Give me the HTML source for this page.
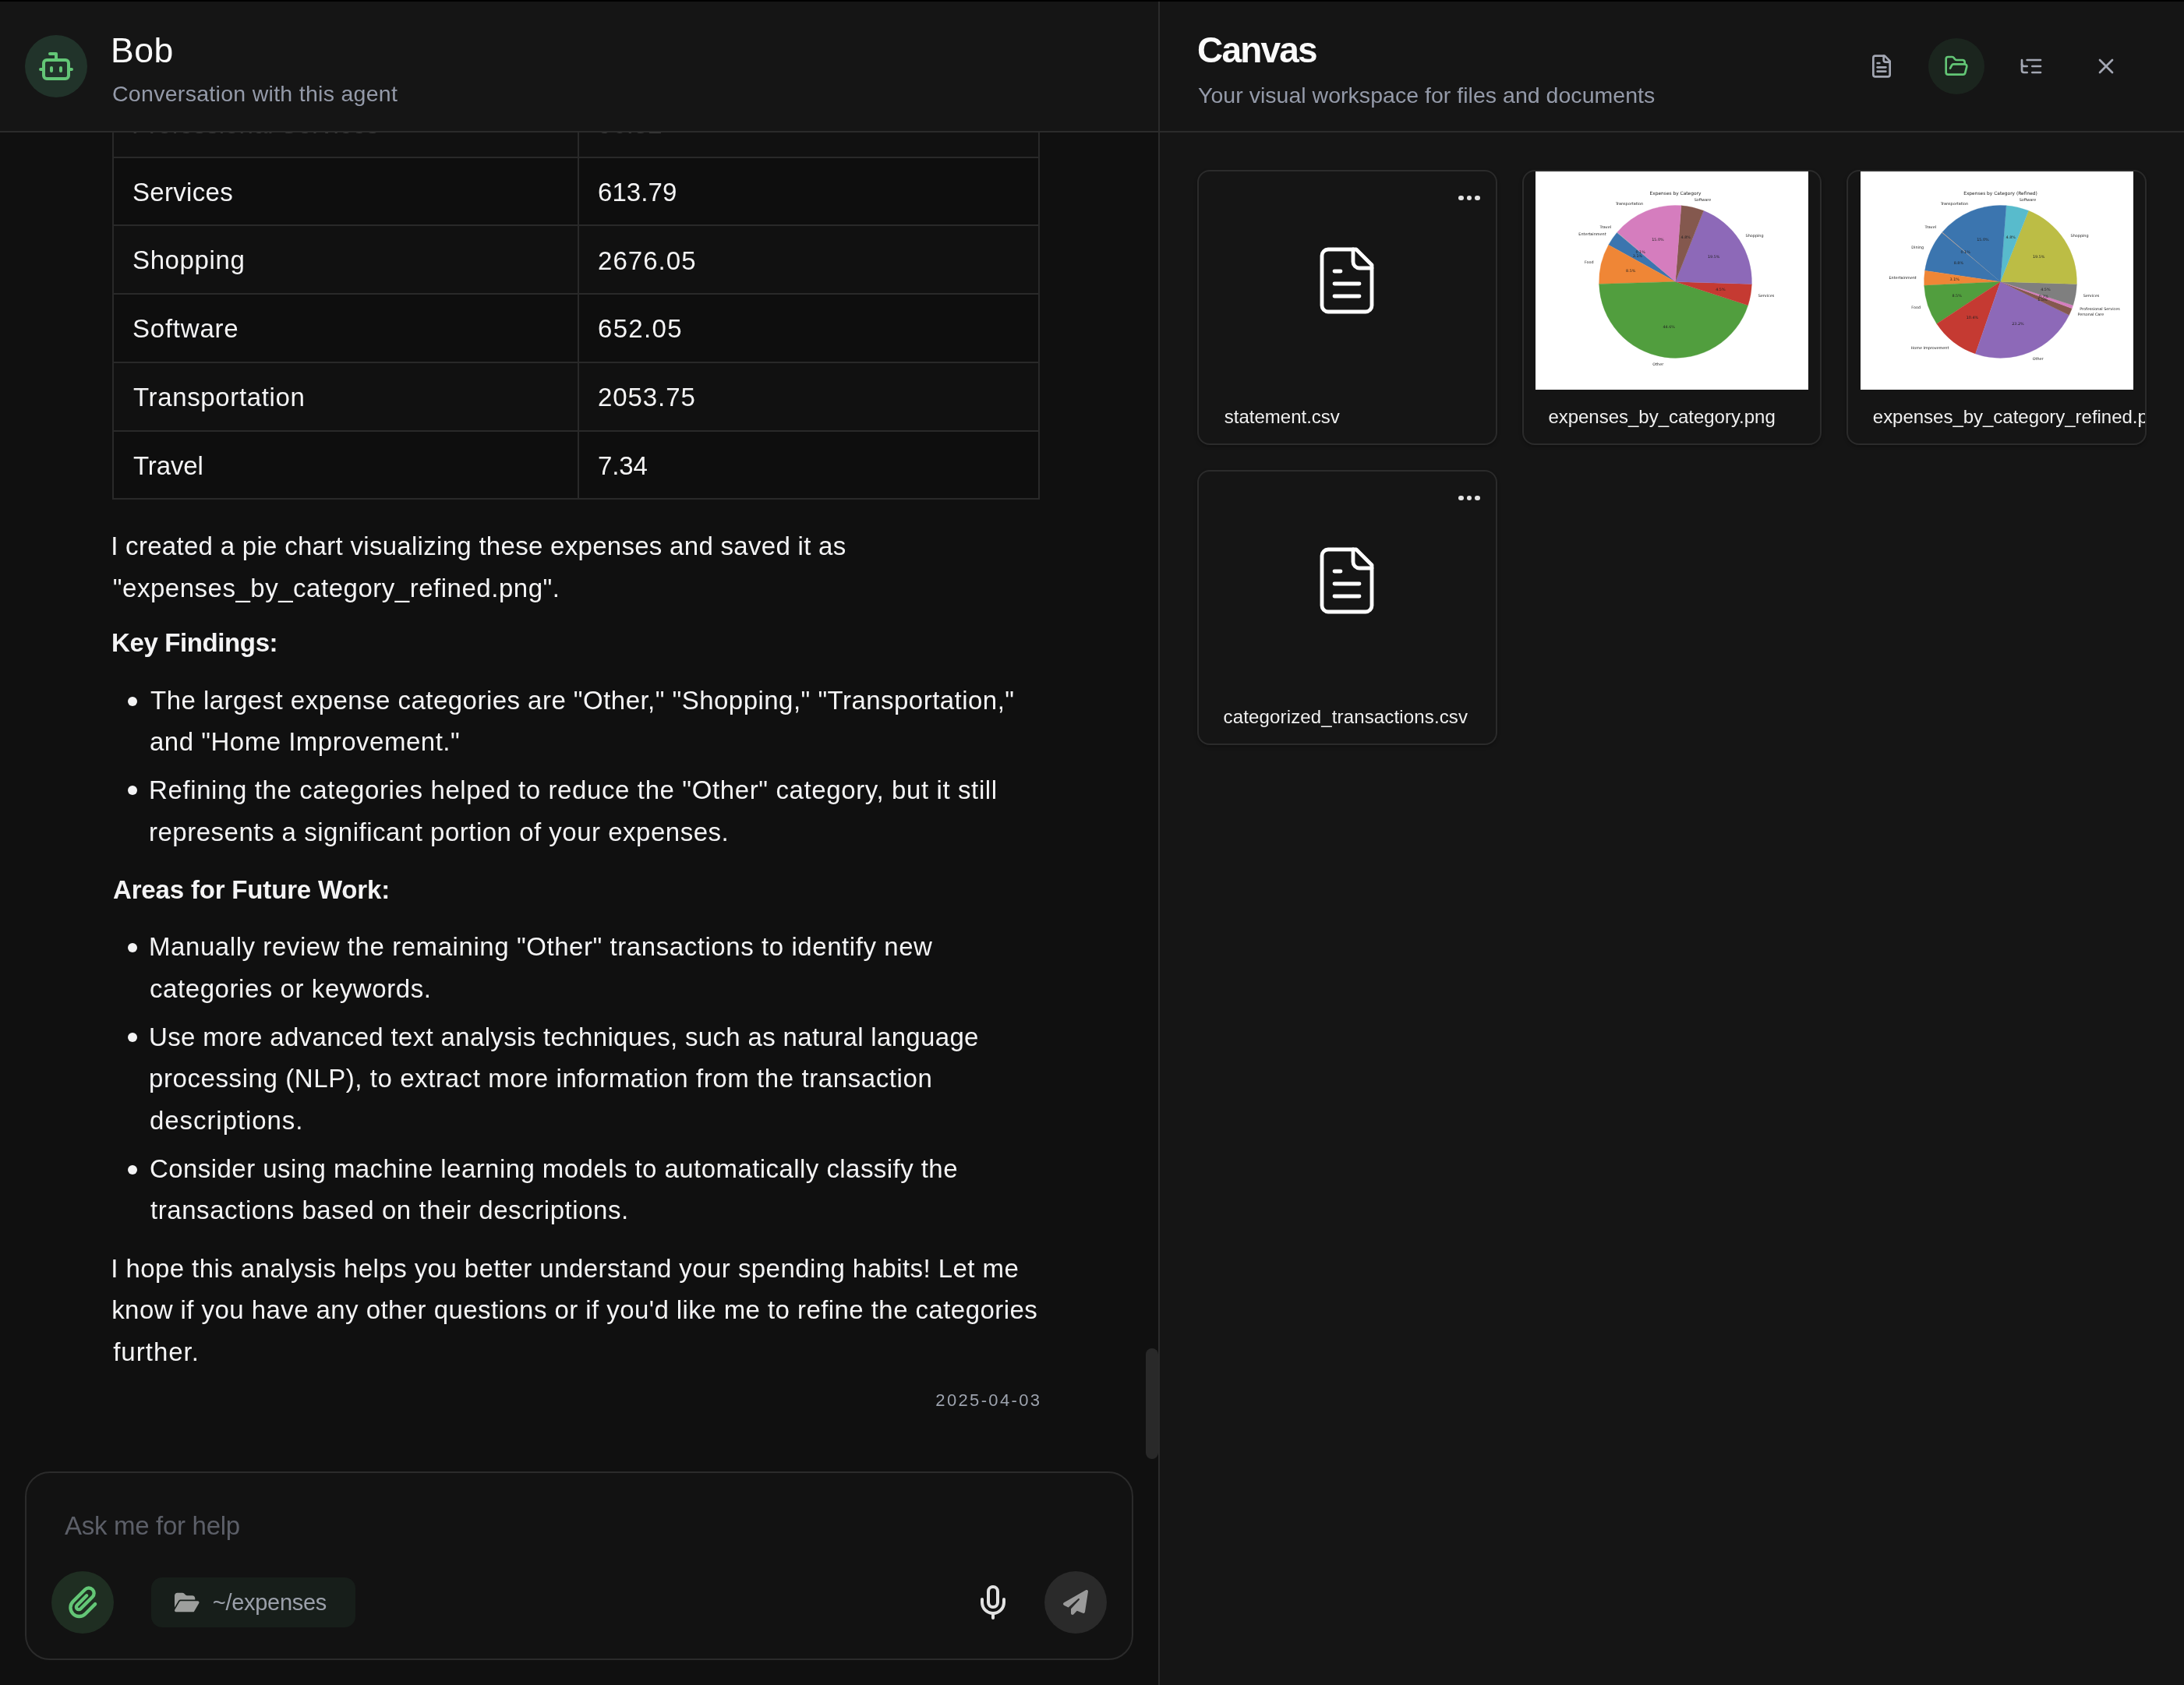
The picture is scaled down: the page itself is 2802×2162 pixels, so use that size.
<!DOCTYPE html>
<html lang="en"><head><meta charset="utf-8"><title>Bob - Canvas</title>
<style>
*{box-sizing:border-box;margin:0;padding:0}
html,body{width:2802px;height:2162px;overflow:hidden;background:#101010;font-family:"Liberation Sans", sans-serif;}
#app{position:relative;width:2802px;height:2162px;overflow:hidden;will-change:transform}
.t{position:absolute;white-space:nowrap;}
.ic{position:absolute;display:block;overflow:visible}
.ln{position:absolute;background:#2b2b2b}
.dot{position:absolute;width:6.4px;height:6.4px;border-radius:50%;background:#e2e2e2}
.bul{position:absolute;width:12px;height:12px;border-radius:50%;background:#f4f4f5}
.card{position:absolute;width:384.67px;height:353px;border:2px solid #2b2b2b;border-radius:16px;background:#151515;overflow:hidden;box-shadow:0 2px 4px rgba(0,0,0,.28)}
.circ{position:absolute;border-radius:50%}
</style></head><body>
<div id="app">
<!-- chat scroll area -->
<div id="chat" style="position:absolute;left:0;top:0;width:1486px;height:2162px">
<div style="position:absolute;left:146px;top:116px;width:1186px;height:85px;background:#111111"></div><div style="position:absolute;left:146px;top:203px;width:1186px;height:85px;background:#0e0e0e"></div><div style="position:absolute;left:146px;top:290px;width:1186px;height:86px;background:#111111"></div><div style="position:absolute;left:146px;top:378px;width:1186px;height:86px;background:#0e0e0e"></div><div style="position:absolute;left:146px;top:466px;width:1186px;height:86px;background:#111111"></div><div style="position:absolute;left:146px;top:554px;width:1186px;height:85px;background:#0e0e0e"></div><div class="ln" style="left:144px;top:201px;width:1190px;height:2px;background:#292929"></div><div class="ln" style="left:144px;top:288px;width:1190px;height:2px;background:#292929"></div><div class="ln" style="left:144px;top:376px;width:1190px;height:2px;background:#292929"></div><div class="ln" style="left:144px;top:464px;width:1190px;height:2px;background:#292929"></div><div class="ln" style="left:144px;top:552px;width:1190px;height:2px;background:#292929"></div><div class="ln" style="left:144px;top:639px;width:1190px;height:2px;background:#292929"></div><div class="ln" style="left:144px;top:150px;width:2px;height:491px;background:#292929"></div><div class="ln" style="left:741px;top:150px;width:2px;height:491px;background:#292929"></div><div class="ln" style="left:1332px;top:150px;width:2px;height:491px;background:#292929"></div>
<i class="bul" style="left:163.5px;top:893.5px"></i><i class="bul" style="left:163.5px;top:1008.3px"></i><i class="bul" style="left:163.5px;top:1209.5px"></i><i class="bul" style="left:163.5px;top:1325.0px"></i><i class="bul" style="left:163.5px;top:1494.5px"></i>
<div class="t" id="t_r0a" style="left:169.0px;top:137.8px;font-size:33px;line-height:43px;letter-spacing:0.000px;color:rgba(244,244,245,0.2);">Professional Services</div><div class="t" id="t_r0b" style="left:767.0px;top:138.0px;font-size:33px;line-height:43px;letter-spacing:0.000px;color:rgba(244,244,245,0.2);">96.32</div><div class="t" id="t_r1a" style="left:170.0px;top:224.7px;font-size:33px;line-height:43px;letter-spacing:0.316px;color:#f4f4f5;">Services</div><div class="t" id="t_r1b" style="left:767.0px;top:225.0px;font-size:33px;line-height:43px;letter-spacing:0.084px;color:#f4f4f5;">613.79</div><div class="t" id="t_r2a" style="left:170.0px;top:312.4px;font-size:33px;line-height:43px;letter-spacing:0.628px;color:#f4f4f5;">Shopping</div><div class="t" id="t_r2b" style="left:767.0px;top:312.7px;font-size:33px;line-height:43px;letter-spacing:1.053px;color:#f4f4f5;">2676.05</div><div class="t" id="t_r3a" style="left:170.0px;top:400.1px;font-size:33px;line-height:43px;letter-spacing:0.775px;color:#f4f4f5;">Software</div><div class="t" id="t_r3b" style="left:767.0px;top:400.4px;font-size:33px;line-height:43px;letter-spacing:1.334px;color:#f4f4f5;">652.05</div><div class="t" id="t_r4a" style="left:171.0px;top:487.8px;font-size:33px;line-height:43px;letter-spacing:0.646px;color:#f4f4f5;">Transportation</div><div class="t" id="t_r4b" style="left:767.0px;top:488.1px;font-size:33px;line-height:43px;letter-spacing:0.928px;color:#f4f4f5;">2053.75</div><div class="t" id="t_r5a" style="left:171.0px;top:575.5px;font-size:33px;line-height:43px;letter-spacing:-0.126px;color:#f4f4f5;">Travel</div><div class="t" id="t_r5b" style="left:767.0px;top:575.8px;font-size:33px;line-height:43px;letter-spacing:-0.126px;color:#f4f4f5;">7.34</div><div class="t" id="t_l1" style="left:142.2px;top:679.0px;font-size:33px;line-height:43px;letter-spacing:0.293px;color:#f4f4f5;">I created a pie chart visualizing these expenses and saved it as</div><div class="t" id="t_l2" style="left:144.8px;top:732.8px;font-size:33px;line-height:43px;letter-spacing:0.520px;color:#f4f4f5;">&quot;expenses_by_category_refined.png&quot;.</div><div class="t" id="t_h1" style="left:143.0px;top:802.5px;font-size:33px;line-height:43px;letter-spacing:-0.382px;color:#f4f4f5;font-weight:700;">Key Findings:</div><div class="t" id="t_b1a" style="left:193.0px;top:877.0px;font-size:33px;line-height:43px;letter-spacing:0.468px;color:#f4f4f5;">The largest expense categories are &quot;Other,&quot; &quot;Shopping,&quot; &quot;Transportation,&quot;</div><div class="t" id="t_b1b" style="left:192.0px;top:930.3px;font-size:33px;line-height:43px;letter-spacing:0.506px;color:#f4f4f5;">and &quot;Home Improvement.&quot;</div><div class="t" id="t_b2a" style="left:191.0px;top:991.8px;font-size:33px;line-height:43px;letter-spacing:0.613px;color:#f4f4f5;">Refining the categories helped to reduce the &quot;Other&quot; category, but it still</div><div class="t" id="t_b2b" style="left:191.0px;top:1045.5px;font-size:33px;line-height:43px;letter-spacing:0.502px;color:#f4f4f5;">represents a significant portion of your expenses.</div><div class="t" id="t_h2" style="left:145.0px;top:1119.5px;font-size:33px;line-height:43px;letter-spacing:-0.171px;color:#f4f4f5;font-weight:700;">Areas for Future Work:</div><div class="t" id="t_b3a" style="left:191.0px;top:1193.2px;font-size:33px;line-height:43px;letter-spacing:0.567px;color:#f4f4f5;">Manually review the remaining &quot;Other&quot; transactions to identify new</div><div class="t" id="t_b3b" style="left:192.0px;top:1246.6px;font-size:33px;line-height:43px;letter-spacing:0.563px;color:#f4f4f5;">categories or keywords.</div><div class="t" id="t_b4a" style="left:191.0px;top:1308.5px;font-size:33px;line-height:43px;letter-spacing:0.336px;color:#f4f4f5;">Use more advanced text analysis techniques, such as natural language</div><div class="t" id="t_b4b" style="left:191.0px;top:1362.0px;font-size:33px;line-height:43px;letter-spacing:0.588px;color:#f4f4f5;">processing (NLP), to extract more information from the transaction</div><div class="t" id="t_b4c" style="left:192.0px;top:1415.6px;font-size:33px;line-height:43px;letter-spacing:0.935px;color:#f4f4f5;">descriptions.</div><div class="t" id="t_b5a" style="left:192.0px;top:1477.8px;font-size:33px;line-height:43px;letter-spacing:0.440px;color:#f4f4f5;">Consider using machine learning models to automatically classify the</div><div class="t" id="t_b5b" style="left:193.0px;top:1531.3px;font-size:33px;line-height:43px;letter-spacing:0.565px;color:#f4f4f5;">transactions based on their descriptions.</div><div class="t" id="t_p2a" style="left:142.2px;top:1605.7px;font-size:33px;line-height:43px;letter-spacing:0.430px;color:#f4f4f5;">I hope this analysis helps you better understand your spending habits! Let me</div><div class="t" id="t_p2b" style="left:143.2px;top:1659.1px;font-size:33px;line-height:43px;letter-spacing:0.434px;color:#f4f4f5;">know if you have any other questions or if you'd like me to refine the categories</div><div class="t" id="t_p2c" style="left:145.2px;top:1712.5px;font-size:33px;line-height:43px;letter-spacing:1.007px;color:#f4f4f5;">further.</div><div class="t" id="t_date" style="left:1200.3px;top:1781.8px;font-size:22px;line-height:29px;letter-spacing:2.356px;color:#9da3ae;">2025-04-03</div>
<div style="position:absolute;left:1470px;top:1730px;width:16px;height:142px;border-radius:8px;background:#292929"></div>
<!-- input box -->
<div style="position:absolute;left:32px;top:1888px;width:1422px;height:242px;border:2px solid #2b2b2b;border-radius:32px;background:#121212"></div>
<div class="t" id="t_ph" style="left:83.0px;top:1936.3px;font-size:33px;line-height:43px;letter-spacing:-0.297px;color:#5c5f68;">Ask me for help</div>
<div class="circ" style="left:66px;top:2016px;width:80px;height:80px;background:#1f2e22"></div>
<svg class="ic" style="left:76px;top:2026px" width="60" height="60" viewBox="0 0 60 60" fill="none" stroke="#63c676" stroke-width="4.35" stroke-linecap="round" stroke-linejoin="round"><path d="M46.10 32.10L33.52 44.69A11.17 11.17 0 0 1 17.71 28.89L33.13 13.47A6.72 6.72 0 0 1 42.64 22.98L27.37 38.25A3.22 3.22 0 0 1 22.80 33.69L35.18 21.32"/></svg>
<div style="position:absolute;left:194px;top:2024px;width:262px;height:64px;border-radius:14px;background:#171e1a"></div>
<div class="t" id="t_chip" style="left:272.8px;top:2036.5px;font-size:29px;line-height:38px;letter-spacing:-0.293px;color:#9ba0aa;">~/expenses</div>
<svg class="ic" style="left:223.9px;top:2042px" width="31.5" height="28" viewBox="0 0 576 512"><path fill="#9d9f9d" d="M88.7 223.8L0 375.8V96C0 60.7 28.7 32 64 32H181.5c17 0 33.3 6.7 45.3 18.7l26.5 26.5c12 12 28.3 18.7 45.3 18.7H416c35.3 0 64 28.7 64 64v32H144c-22.800 0-43.800 12.100-55.300 31.800zm27.600 16.100C122.100 230 132.600 224 144 224H544c11.500 0 22 6.100 27.700 16.100s5.700 22.200-.1 32.100l-112 192C453.900 474 443.400 480 432 480H32c-11.500 0-22-6.100-27.700-16.100s-5.700-22.200 .1-32.100l112-192z"/></svg>
<svg class="ic" style="left:1250px;top:2032px" width="48" height="48" viewBox="0 0 24 24" fill="none" stroke="#e2e2e2" stroke-width="2" stroke-linecap="round" stroke-linejoin="round" ><path d="M12 2a3 3 0 0 0-3 3v7a3 3 0 0 0 6 0V5a3 3 0 0 0-3-3Z"/><path d="M19 10v2a7 7 0 0 1-14 0v-2"/><line x1="12" x2="12" y1="19" y2="22"/></svg>
<div class="circ" style="left:1340px;top:2016px;width:80px;height:80px;background:#2a2a2a"></div>
<svg class="ic" style="left:1364px;top:2040px" width="32" height="32" viewBox="0 0 512 512"><path fill="#9a9a9a" d="M498.1 5.6c10.100 7 15.400 19.100 13.500 31.200l-64 416c-1.500 9.700-7.400 18.200-16 23s-18.900 5.400-28 1.600L284 427.700l-68.500 74.100c-8.900 9.700-22.900 12.900-35.200 8.100S160 493.200 160 480V396.400c0-4 1.500-7.800 4.200-10.700L331.800 202.800c5.800-6.300 5.600-16-.4-22s-15.700-6.400-22-.7L106 360.800 17.700 316.600C7.100 311.300 .3 300.700 0 288.900s5.900-22.800 16.100-28.700l448-256c10.700-6.100 23.900-5.500 34 1.400z"/></svg>
</div>
<!-- left header -->
<div style="position:absolute;left:0;top:0;width:1486px;height:168px;background:#151515"></div>
<div class="ln" style="left:0;top:168px;width:2802px;height:2px"></div>
<div class="circ" style="left:32px;top:45px;width:80px;height:80px;background:#21332a"></div>
<svg class="ic" style="left:48px;top:61px" width="48" height="48" viewBox="0 0 24 24" fill="none" stroke="#63c676" stroke-width="2" stroke-linecap="round" stroke-linejoin="round" ><path d="M12 8V4H8"/><rect width="16" height="12" x="4" y="8" rx="2"/><path d="M2 14h2"/><path d="M20 14h2"/><path d="M15 13v2"/><path d="M9 13v2"/></svg>
<div class="t" id="t_bob" style="left:142.0px;top:36.0px;font-size:44.5px;line-height:58px;letter-spacing:0.535px;color:#fafafa;">Bob</div><div class="t" id="t_bobsub" style="left:144.0px;top:101.5px;font-size:28.5px;line-height:37px;letter-spacing:0.292px;color:#949aa9;">Conversation with this agent</div>
<!-- right panel -->
<div style="position:absolute;left:1488px;top:0;width:1314px;height:2162px;background:#151515"></div>
<div class="ln" style="left:1488px;top:168px;width:1314px;height:2px"></div>
<div class="ln" style="left:1486px;top:0;width:2px;height:2162px"></div>
<div class="t" id="t_canvas" style="left:1536.0px;top:33.6px;font-size:46px;line-height:60px;letter-spacing:-1.813px;color:#fafafa;font-weight:700;">Canvas</div><div class="t" id="t_canvassub" style="left:1537.0px;top:104.3px;font-size:28.5px;line-height:37px;letter-spacing:0.026px;color:#949aa9;">Your visual workspace for files and documents</div>
<svg class="ic" style="left:2398px;top:69px" width="32" height="32" viewBox="0 0 24 24" fill="none" stroke="#a3a7b3" stroke-width="2" stroke-linecap="round" stroke-linejoin="round" ><path d="M15 2H6a2 2 0 0 0-2 2v16a2 2 0 0 0 2 2h12a2 2 0 0 0 2-2V7Z"/><path d="M14 2v4a2 2 0 0 0 2 2h4"/><path d="M10 9H8"/><path d="M16 13H8"/><path d="M16 17H8"/></svg>
<div class="circ" style="left:2474px;top:49px;width:72px;height:72px;background:#1b251e"></div>
<svg class="ic" style="left:2494px;top:69px" width="32" height="32" viewBox="0 0 24 24" fill="none" stroke="#63c676" stroke-width="2" stroke-linecap="round" stroke-linejoin="round" ><path d="m6 14 1.5-2.9A2 2 0 0 1 9.24 10H20a2 2 0 0 1 1.94 2.5l-1.54 6a2 2 0 0 1-1.95 1.5H4a2 2 0 0 1-2-2V5a2 2 0 0 1 2-2h3.9a2 2 0 0 1 1.69.9l.81 1.2a2 2 0 0 0 1.67.9H18a2 2 0 0 1 2 2v2"/></svg>
<svg class="ic" style="left:2590px;top:69px" width="32" height="32" viewBox="0 0 24 24" fill="none" stroke="#a3a7b3" stroke-width="2" stroke-linecap="round" stroke-linejoin="round" ><path d="M21 12h-8"/><path d="M21 6H8"/><path d="M21 18h-8"/><path d="M3 6v4c0 1.1.9 2 2 2h3"/><path d="M3 10v6c0 1.1.9 2 2 2h3"/></svg>
<svg class="ic" style="left:2686px;top:69px" width="32" height="32" viewBox="0 0 24 24" fill="none" stroke="#a3a7b3" stroke-width="2" stroke-linecap="round" stroke-linejoin="round" ><path d="M18 6 6 18"/><path d="m6 6 12 12"/></svg>
<div class="card" style="left:1536.00px;top:218px"></div>
<div class="card" style="left:1952.67px;top:218px"><div style="position:absolute;left:15.3px;top:0;width:350px;height:280px"><svg width="350" height="280" viewBox="0 0 350 280" style="display:block;will-change:transform">
<rect width="350" height="280" fill="#fff"/>
<path d="M179.50 141.40L104.43 78.41A98.0 98.0 0 0 0 93.65 94.13Z" fill="#3b75af" stroke="#3b75af" stroke-width="0.3"/>
<path d="M179.50 141.40L93.65 94.13A98.0 98.0 0 0 0 81.55 144.41Z" fill="#ef8636" stroke="#ef8636" stroke-width="0.3"/>
<path d="M179.50 141.40L81.55 144.41A98.0 98.0 0 0 0 272.68 171.75Z" fill="#519e3e" stroke="#519e3e" stroke-width="0.3"/>
<path d="M179.50 141.40L272.68 171.75A98.0 98.0 0 0 0 277.45 144.55Z" fill="#c53a32" stroke="#c53a32" stroke-width="0.3"/>
<path d="M179.50 141.40L277.45 144.55A98.0 98.0 0 0 0 215.64 50.31Z" fill="#8d69b8" stroke="#8d69b8" stroke-width="0.3"/>
<path d="M179.50 141.40L215.64 50.31A98.0 98.0 0 0 0 186.95 43.68Z" fill="#84584e" stroke="#84584e" stroke-width="0.3"/>
<path d="M179.50 141.40L186.95 43.68A98.0 98.0 0 0 0 104.82 77.94Z" fill="#d57dbe" stroke="#d57dbe" stroke-width="0.3"/>
<path d="M179.50 141.40L104.82 77.94A98.0 98.0 0 0 0 104.43 78.41Z" fill="#7f7f7f" stroke="#7f7f7f" stroke-width="0" opacity="0.55"/>
<g font-family="DejaVu Sans, Liberation Sans, sans-serif" font-size="4.9" fill="#222">
<text x="90.6" y="81.8" text-anchor="end">Entertainment</text>
<text x="131.0" y="109.8" text-anchor="middle">3.1%</text>
<text x="74.7" y="117.5" text-anchor="end">Food</text>
<text x="122.3" y="129.2" text-anchor="middle">8.5%</text>
<text x="164.2" y="249.4" text-anchor="end">Other</text>
<text x="171.2" y="201.2" text-anchor="middle">44.6%</text>
<text x="285.7" y="161.3" text-anchor="start">Services</text>
<text x="237.4" y="153.1" text-anchor="middle">4.5%</text>
<text x="269.6" y="83.6" text-anchor="start">Shopping</text>
<text x="228.7" y="110.8" text-anchor="middle">19.5%</text>
<text x="203.7" y="37.7" text-anchor="start">Software</text>
<text x="192.7" y="85.7" text-anchor="middle">4.8%</text>
<text x="138.0" y="43.2" text-anchor="end">Transportation</text>
<text x="156.9" y="88.7" text-anchor="middle">15.0%</text>
<text x="97.1" y="73.1" text-anchor="end">Travel</text>
<text x="134.6" y="105.1" text-anchor="middle">0.1%</text>
</g>
<text x="179.5" y="30.3" text-anchor="middle" font-family="DejaVu Sans, Liberation Sans, sans-serif" font-size="5.9" fill="#222">Expenses by Category</text>
</svg></div></div>
<div class="card" style="left:2369.34px;top:218px"><div style="position:absolute;left:15.3px;top:0;width:350px;height:280px"><svg width="350" height="280" viewBox="0 0 350 280" style="display:block;will-change:transform">
<rect width="350" height="280" fill="#fff"/>
<path d="M179.50 141.40L104.43 78.41A98.0 98.0 0 0 0 82.53 127.22Z" fill="#3b75af" stroke="#3b75af" stroke-width="0.3"/>
<path d="M179.50 141.40L82.53 127.22A98.0 98.0 0 0 0 81.62 146.26Z" fill="#ef8636" stroke="#ef8636" stroke-width="0.3"/>
<path d="M179.50 141.40L81.62 146.26A98.0 98.0 0 0 0 97.72 195.40Z" fill="#519e3e" stroke="#519e3e" stroke-width="0.3"/>
<path d="M179.50 141.40L97.72 195.40A98.0 98.0 0 0 0 147.40 233.99Z" fill="#c53a32" stroke="#c53a32" stroke-width="0.3"/>
<path d="M179.50 141.40L147.40 233.99A98.0 98.0 0 0 0 267.61 184.30Z" fill="#8d69b8" stroke="#8d69b8" stroke-width="0.3"/>
<path d="M179.50 141.40L267.61 184.30A98.0 98.0 0 0 0 271.26 175.82Z" fill="#84584e" stroke="#84584e" stroke-width="0.3"/>
<path d="M179.50 141.40L271.26 175.82A98.0 98.0 0 0 0 272.68 171.75Z" fill="#d57dbe" stroke="#d57dbe" stroke-width="0.3"/>
<path d="M179.50 141.40L272.68 171.75A98.0 98.0 0 0 0 277.45 144.55Z" fill="#7f7f7f" stroke="#7f7f7f" stroke-width="0.3"/>
<path d="M179.50 141.40L277.45 144.55A98.0 98.0 0 0 0 215.64 50.31Z" fill="#bcbd45" stroke="#bcbd45" stroke-width="0.3"/>
<path d="M179.50 141.40L215.64 50.31A98.0 98.0 0 0 0 186.95 43.68Z" fill="#58bbcc" stroke="#58bbcc" stroke-width="0.3"/>
<path d="M179.50 141.40L186.95 43.68A98.0 98.0 0 0 0 104.82 77.94Z" fill="#3b75af" stroke="#3b75af" stroke-width="0.3"/>
<path d="M179.50 141.40L104.82 77.94A98.0 98.0 0 0 0 104.43 78.41Z" fill="#ef8636" stroke="#ef8636" stroke-width="0" opacity="0.55"/>
<g font-family="DejaVu Sans, Liberation Sans, sans-serif" font-size="4.9" fill="#222">
<text x="81.1" y="98.6" text-anchor="end">Dining</text>
<text x="125.9" y="118.9" text-anchor="middle">8.8%</text>
<text x="71.8" y="137.5" text-anchor="end">Entertainment</text>
<text x="120.8" y="140.2" text-anchor="middle">3.1%</text>
<text x="77.1" y="176.3" text-anchor="end">Food</text>
<text x="123.6" y="161.3" text-anchor="middle">8.5%</text>
<text x="113.4" y="227.8" text-anchor="end">Home Improvement</text>
<text x="143.4" y="189.4" text-anchor="middle">10.4%</text>
<text x="220.7" y="242.3" text-anchor="start">Other</text>
<text x="202.0" y="197.3" text-anchor="middle">23.2%</text>
<text x="278.5" y="185.3" text-anchor="start">Personal Care</text>
<text x="233.5" y="166.2" text-anchor="middle">1.5%</text>
<text x="281.2" y="178.3" text-anchor="start">Professional Services</text>
<text x="235.0" y="162.4" text-anchor="middle">0.7%</text>
<text x="285.7" y="161.3" text-anchor="start">Services</text>
<text x="237.4" y="153.1" text-anchor="middle">4.5%</text>
<text x="269.6" y="83.6" text-anchor="start">Shopping</text>
<text x="228.7" y="110.8" text-anchor="middle">19.5%</text>
<text x="203.7" y="37.7" text-anchor="start">Software</text>
<text x="192.7" y="85.7" text-anchor="middle">4.8%</text>
<text x="138.0" y="43.2" text-anchor="end">Transportation</text>
<text x="156.9" y="88.7" text-anchor="middle">15.0%</text>
<text x="97.1" y="73.1" text-anchor="end">Travel</text>
<text x="134.6" y="105.1" text-anchor="middle">0.1%</text>
</g>
<text x="179.5" y="30.3" text-anchor="middle" font-family="DejaVu Sans, Liberation Sans, sans-serif" font-size="5.9" fill="#222">Expenses by Category (Refined)</text>
</svg></div></div>
<div class="card" style="left:1536.00px;top:603px"></div>
<svg class="ic" style="left:1680.3px;top:312px" width="96" height="96" viewBox="0 0 24 24" fill="none" stroke="#ffffff" stroke-width="1.2" stroke-linecap="round" stroke-linejoin="round" ><path d="M15 2H6a2 2 0 0 0-2 2v16a2 2 0 0 0 2 2h12a2 2 0 0 0 2-2V7Z"/><path d="M14 2v4a2 2 0 0 0 2 2h4"/><path d="M10 9H8"/><path d="M16 13H8"/><path d="M16 17H8"/></svg><svg class="ic" style="left:1680.3px;top:697px" width="96" height="96" viewBox="0 0 24 24" fill="none" stroke="#ffffff" stroke-width="1.2" stroke-linecap="round" stroke-linejoin="round" ><path d="M15 2H6a2 2 0 0 0-2 2v16a2 2 0 0 0 2 2h12a2 2 0 0 0 2-2V7Z"/><path d="M14 2v4a2 2 0 0 0 2 2h4"/><path d="M10 9H8"/><path d="M16 13H8"/><path d="M16 17H8"/></svg>
<i class="dot" style="left:1871.2px;top:250.8px"></i><i class="dot" style="left:1881.8px;top:250.8px"></i><i class="dot" style="left:1892.4px;top:250.8px"></i><i class="dot" style="left:1871.2px;top:635.8px"></i><i class="dot" style="left:1881.8px;top:635.8px"></i><i class="dot" style="left:1892.4px;top:635.8px"></i>
<div class="t" id="t_f1" style="left:1570.8px;top:518.8px;font-size:24px;line-height:31px;letter-spacing:-0.005px;color:#f0f0f0;">statement.csv</div><div class="t" id="t_f2" style="left:1986.4px;top:518.8px;font-size:24px;line-height:31px;letter-spacing:-0.018px;color:#f0f0f0;">expenses_by_category.png</div>
<div style="position:absolute;left:2371.34px;top:500px;width:380.67px;height:68px;overflow:hidden"><div style="position:absolute;left:-2371.34px;top:-500px"><div class="t" id="t_f3" style="left:2402.8px;top:518.8px;font-size:24px;line-height:31px;letter-spacing:-0.018px;color:#f0f0f0;">expenses_by_category_refined.png</div></div></div>
<div class="t" id="t_f4" style="left:1569.6px;top:903.8px;font-size:24px;line-height:31px;letter-spacing:0.145px;color:#f0f0f0;">categorized_transactions.csv</div>
<!-- top strip -->
<div style="position:absolute;left:0;top:0;width:2802px;height:2px;background:#000"></div>
</div>
<script>(function(){var w=window.innerWidth;if(w&&Math.abs(w-2802)>2){var k=w/2802,a=document.getElementById('app');a.style.transformOrigin='0 0';a.style.transform='scale('+k+')';var h=Math.round(2162*k)+'px';document.documentElement.style.width=document.body.style.width=w+'px';document.documentElement.style.height=document.body.style.height=h;}})();</script>
</body></html>
